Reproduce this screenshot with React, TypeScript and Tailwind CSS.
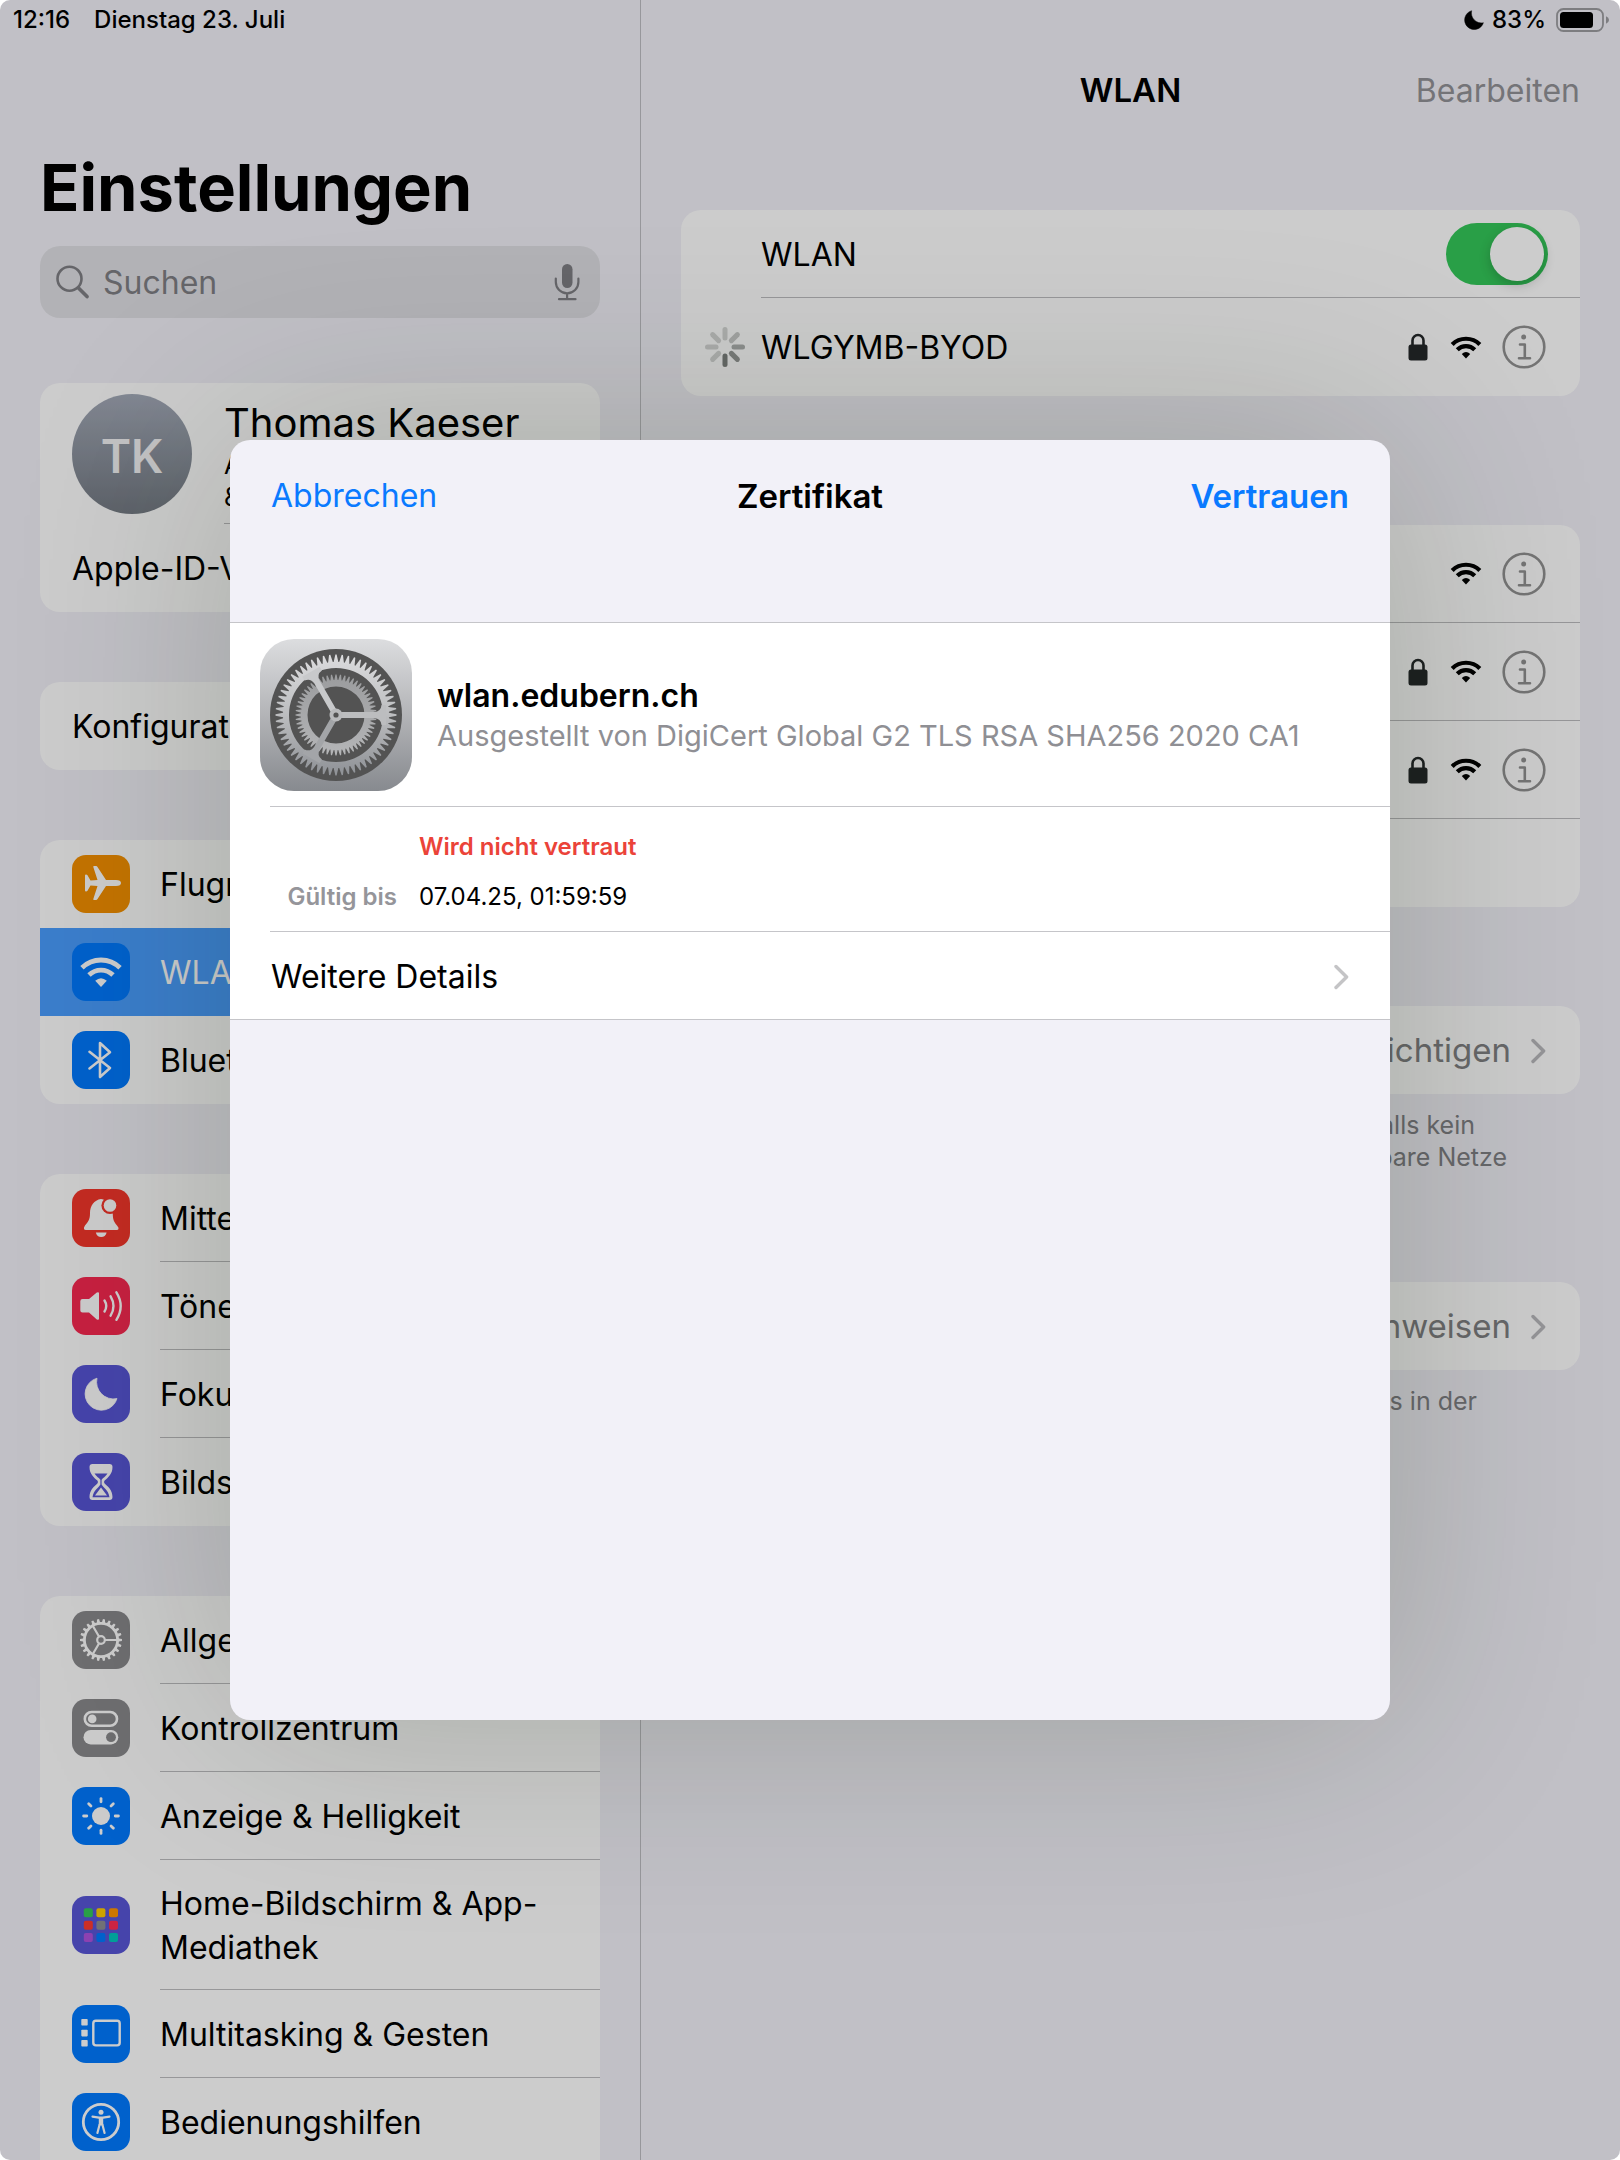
import type { ReactNode } from "react";

const LIGHT = "#ffffff";

/* ---------- geometry helpers ---------- */

function gearPath(cx: number, cy: number, tip: number, root: number, teeth: number, tipShare = 0.3, rootShare = 0.7) {
  const pts: string[] = [];
  const step = (Math.PI * 2) / teeth;
  for (let i = 0; i < teeth; i++) {
    const a = i * step;
    const corners: [number, number][] = [
      [root, -rootShare / 2],
      [tip, -tipShare / 2],
      [tip, tipShare / 2],
      [root, rootShare / 2],
    ];
    for (const [r, o] of corners) {
      const t = a + o * step;
      pts.push(`${(cx + r * Math.cos(t)).toFixed(2)} ${(cy + r * Math.sin(t)).toFixed(2)}`);
    }
  }
  return `M${pts.join("L")}Z`;
}

/* ---------- small glyphs ---------- */

function WifiShape({ stroke }: { stroke: number }) {
  return (
    <>
      <path d="M10 24.8A27 27 0 0 1 48 24.8" fill="none" stroke="currentColor" strokeWidth={stroke} />
      <path d="M17 32A17 17 0 0 1 41 32" fill="none" stroke="currentColor" strokeWidth={stroke} />
      <path d="M29 44L23.2 37.8Q29 32.6 34.8 37.8Z" fill="currentColor" />
    </>
  );
}

function WifiIcon() {
  return (
    <svg viewBox="7 12 44 34" className="h-[25px] w-8 text-black" aria-hidden="true">
      <WifiShape stroke={5.8} />
    </svg>
  );
}

function LockIcon() {
  return (
    <svg viewBox="0 0 20 28" className="h-7 w-5" aria-hidden="true">
      <path d="M4.5 13V7.5a5.5 5.5 0 0 1 11 0V13" fill="none" stroke="#25282a" strokeWidth="2.6" />
      <rect x="0.5" y="11.5" width="19" height="16" rx="2.5" fill="#25282a" />
    </svg>
  );
}

function InfoIcon() {
  return (
    <svg viewBox="0 0 44 44" className="h-11 w-11" fill="none" stroke="#919191" aria-hidden="true">
      <circle cx="22" cy="22" r="20.3" strokeWidth="2.6" />
      <circle cx="21.7" cy="12" r="2.5" fill="#919191" stroke="none" />
      <path d="M18 19.5h4.8V33M17 33.3h11" strokeWidth="2.6" strokeLinecap="round" strokeLinejoin="round" />
    </svg>
  );
}

function Chevron({ className }: { className: string }) {
  return (
    <svg viewBox="0 0 15 26" className={`h-[26px] w-[15px] ${className}`} fill="none" stroke="currentColor" strokeWidth="3.4" strokeLinecap="round" strokeLinejoin="round" aria-hidden="true">
      <path d="M2 2.5L12.6 13L2 23.5" />
    </svg>
  );
}

function Spinner() {
  const opacities = [0.22, 0.28, 0.42, 0.55, 0.68, 0.22, 0.22, 0.22];
  return (
    <svg viewBox="0 0 40 40" className="h-10 w-10" aria-hidden="true">
      {opacities.map((opacity, i) => (
        <rect key={i} x="17.5" y="0" width="5" height="13.5" rx="2.5" fill="#3f4542" opacity={opacity} transform={`rotate(${i * 45} 20 20)`} />
      ))}
    </svg>
  );
}

function MoonShape() {
  return <path d="M25 13.2A16.3 16.3 0 1 0 45 33.6A17 17 0 0 1 25 13.2Z" fill="currentColor" stroke="currentColor" strokeWidth="0.8" strokeLinejoin="round" />;
}

/* ---------- sidebar tiles (58 × 58 grid) ---------- */

const glyphs: Record<string, ReactNode> = {
  plane: (
    <path
      fill={LIGHT}
      d="M44 25H34L25.5 12Q25 11 24 11H22Q21 11 21.3 12L25.5 25L18.5 25.5L15.5 20.3Q15 19.5 14 19.5Q13 19.5 13 20.5V35.5Q13 36.5 14 36.5Q15 36.5 15.5 35.7L18.5 30.5L25.5 31L21.3 44Q21 45 22 45H24Q25 45 25.5 44L34 31H44Q49 31 49 28Q49 25 44 25Z"
    />
  ),
  wifi: <WifiShape stroke={4.8} />,
  bluetooth: <path d="M17.5 20.8L38 37L28 46V12L38 21.2L17.5 37.4" fill="none" stroke={LIGHT} strokeWidth="2.6" strokeLinecap="round" strokeLinejoin="round" />,
  bell: (
    <>
      <path fill={LIGHT} d="M29 10C22 11 18 17 18 24C18 31 16 33 13 36.5Q11.5 38.5 12 40Q12.3 41 14 41H44.5Q46.5 41 46.5 40Q47 38.5 45 36.5C42 33 40.8 31 40.8 24C40 17 36 11 29 10Z" />
      <path fill={LIGHT} d="M23.8 43.5H34.6Q33.5 48 29.2 48Q25 48 23.8 43.5Z" />
      <circle cx="38" cy="16.5" r="8.6" fill="#f5362b" />
      <circle cx="38" cy="16.5" r="6.3" fill={LIGHT} />
    </>
  ),
  speaker: (
    <>
      <path fill={LIGHT} d="M10.5 22H17L24.8 15.6Q27 14.4 27 16.5V41.5Q27 43.6 24.8 42.4L17 35.6H10.5Q8.3 35.6 8.3 33.5V24.2Q8.3 22 10.5 22Z" />
      <path d="M32.5 23.5Q36 29 32.5 34.5M38.6 19.3Q44.4 29 38.6 38.7M44.4 15.3Q53 29 44.4 42.8" fill="none" stroke={LIGHT} strokeWidth="2.4" strokeLinecap="round" />
    </>
  ),
  moon: <MoonShape />,
  hourglass: (
    <>
      <path fill={LIGHT} d="M20.5 11H37.5Q40.5 11 40.5 14C40.5 21 36 24.5 32.6 27.6Q31.4 29 32.6 30.4C36 33.5 40.5 37 40.5 44Q40.5 47 37.5 47H20.5Q17.5 47 17.5 44C17.5 37 22 33.5 25.4 30.4Q26.6 29 25.4 27.6C22 24.5 17.5 21 17.5 14Q17.5 11 20.5 11Z" />
      <path fill="#5856d6" d="M22.5 20.6H35.5C34 23.2 31 25 29.6 26.8V31.5C31 34.5 36.5 37 37.5 44.2H20.5C21.5 37 27 34.5 28.4 31.5V26.8C27 25 24 23.2 22.5 20.6Z" />
      <path fill={LIGHT} d="M29 34.5L35 42.6H23Z" />
    </>
  ),
  gear: (
    <>
      <path fill={LIGHT} fillRule="evenodd" d={`${gearPath(29, 29, 21, 18, 22, 0.35, 0.6)}M29 13.8A15.2 15.2 0 1 0 29 44.2A15.2 15.2 0 1 0 29 13.8Z`} />
      <circle cx="29" cy="29" r="3.8" fill="none" stroke={LIGHT} strokeWidth="2.2" />
      <path d="M33 29H45M27 25.5L21 15.2M27 32.5L21 42.8" stroke={LIGHT} strokeWidth="2.2" />
    </>
  ),
  switches: (
    <>
      <rect x="12.8" y="13" width="32.2" height="13.8" rx="6.9" fill="none" stroke={LIGHT} strokeWidth="2.6" />
      <circle cx="20.2" cy="19.9" r="4.3" fill={LIGHT} />
      <rect x="11.5" y="31" width="34.8" height="14.4" rx="7.2" fill={LIGHT} />
      <circle cx="39" cy="38.2" r="4.9" fill="#8a8a8d" />
    </>
  ),
  sun: (
    <>
      <circle cx="29" cy="29" r="9" fill={LIGHT} />
      {[0, 45, 90, 135, 180, 225, 270, 315].map((a) => (
        <path key={a} d="M29 11.6V14.8" stroke={LIGHT} strokeWidth="2.8" strokeLinecap="round" transform={`rotate(${a} 29 29)`} />
      ))}
    </>
  ),
  grid: (
    <>
      {["#34c759", "#ffcc00", "#ff9500", "#ff3b30", "#8e8e93", "#ff2d55", "#af52de", "#007aff", "#00c7be"].map((c, i) => (
        <rect key={c} x={11.8 + (i % 3) * 12.6} y={12.3 + Math.floor(i / 3) * 12.4} width="9" height="9" rx="2" fill={c} />
      ))}
    </>
  ),
  stage: (
    <>
      {[14, 24.8, 35].map((y) => (
        <rect key={y} x="9.3" y={y} width="6.4" height="6.6" rx="0.8" fill={LIGHT} />
      ))}
      <rect x="21.3" y="15.8" width="26.4" height="24.6" rx="2.6" fill="none" stroke={LIGHT} strokeWidth="2.4" />
    </>
  ),
  person: (
    <>
      <circle cx="29" cy="29" r="17.7" fill="none" stroke={LIGHT} strokeWidth="2.8" />
      <circle cx="29" cy="19.2" r="2.5" fill={LIGHT} />
      <path d="M20.5 23.6L27 24.6H31L37.5 23.6M25.4 40L27.6 31.5H30.4L32.6 40" fill="none" stroke={LIGHT} strokeWidth="2.2" strokeLinecap="round" strokeLinejoin="round" />
      <path d="M26.8 24H31.2V32H26.8Z" fill={LIGHT} />
    </>
  ),
};

function Tile({ glyph, color }: { glyph: string; color: string }) {
  return (
    <span className={`h-[58px] w-[58px] shrink-0 overflow-hidden rounded-[14px] text-white ${color}`}>
      <svg viewBox="0 0 58 58" className="h-full w-full" aria-hidden="true">
        {glyphs[glyph]}
      </svg>
    </span>
  );
}

/* ---------- sidebar ---------- */

type Item = { label: string; glyph: string; color: string; selected?: boolean; tall?: boolean; noLine?: boolean };

const groups: Item[][] = [
  [
    { label: "Flugmodus", glyph: "plane", color: "bg-[#f59000]", noLine: true },
    { label: "WLAN", glyph: "wifi", color: "bg-[#007aff]", selected: true, noLine: true },
    { label: "Bluetooth", glyph: "bluetooth", color: "bg-[#007aff]" },
  ],
  [
    { label: "Mitteilungen", glyph: "bell", color: "bg-[#f5362b]" },
    { label: "Töne", glyph: "speaker", color: "bg-[#f92850]" },
    { label: "Fokus", glyph: "moon", color: "bg-[#5856d6]" },
    { label: "Bildschirmzeit", glyph: "hourglass", color: "bg-[#5856d6]" },
  ],
  [
    { label: "Allgemein", glyph: "gear", color: "bg-[#8a8a8d]" },
    { label: "Kontrollzentrum", glyph: "switches", color: "bg-[#8a8a8d]" },
    { label: "Anzeige & Helligkeit", glyph: "sun", color: "bg-[#007aff]" },
    { label: "Home-Bildschirm & App-Mediathek", glyph: "grid", color: "bg-[#5856d6]", tall: true },
    { label: "Multitasking & Gesten", glyph: "stage", color: "bg-[#007aff]" },
    { label: "Bedienungshilfen", glyph: "person", color: "bg-[#007aff]" },
  ],
];

function SidebarRow({ item, last }: { item: Item; last: boolean }) {
  return (
    <a
      href="#"
      className={`flex items-center gap-[30px] pl-8 ${item.tall ? "h-[130px]" : "h-[88px]"} ${item.selected ? "bg-[#4a9eff] text-white" : "text-black"}`}
    >
      <Tile glyph={item.glyph} color={item.color} />
      <span className={`flex h-full min-w-0 flex-1 items-center pt-0.5 text-[32px] leading-[44px] ${last || item.noLine ? "" : "border-b border-[#bdbdc0]"}`}>
        <span className="pr-10">{item.label}</span>
      </span>
    </a>
  );
}

function Sidebar() {
  return (
    <aside className="flex w-[641px] shrink-0 flex-col border-r border-[#bdbdc2] px-10 pt-[148px]">
      <h1 className="text-[65px] leading-[80px] font-bold">Einstellungen</h1>
      <div className="mt-[18px] flex h-[72px] shrink-0 items-center rounded-[20px] bg-[#dfdfe4] pr-5 pl-4 text-[#7f7f84]">
        <svg viewBox="0 0 34 34" className="h-[34px] w-[34px]" fill="none" stroke="currentColor" aria-hidden="true">
          <circle cx="13.5" cy="13.7" r="12" strokeWidth="2.6" />
          <path d="M22.5 23L31 31.6" strokeWidth="3.6" strokeLinecap="round" />
        </svg>
        <input type="search" aria-label="Suchen" placeholder="Suchen" className="ml-[13px] min-w-0 flex-1 bg-transparent pt-0.5 text-[32px] leading-10 outline-none placeholder:text-[#7f7f84]" />
        <button type="button" aria-label="Diktieren">
          <svg viewBox="0 0 26 38" className="h-[38px] w-[26px]" fill="none" stroke="currentColor" strokeWidth="2.2" strokeLinecap="round" aria-hidden="true">
            <rect x="8" y="1" width="10.5" height="24" rx="5.2" fill="currentColor" stroke="none" />
            <path d="M1.8 15.5V19a11.3 11.3 0 0 0 22.6 0V15.5M13.1 30.5V36M5 36.2H21.5" />
          </svg>
        </button>
      </div>

      <section className="mt-[65px] shrink-0 overflow-hidden rounded-[20px] bg-white">
        <a href="#" className="flex h-[141px] items-start gap-8 pl-8">
          <span className="mt-[11px] flex h-[120px] w-[120px] shrink-0 items-center justify-center rounded-full bg-linear-to-b from-[#a3aab8] to-[#757b84] pt-1 text-[46px] font-semibold text-[#f4f4f6]">
            TK
          </span>
          <span className="flex h-full flex-1 flex-col border-b border-[#bdbdc0] pt-3.5 whitespace-nowrap">
            <span className="text-[40px] leading-[52px]">Thomas Kaeser</span>
            <span className="text-[25px] leading-8">Apple-ID, iCloud, Medien</span>
            <span className="text-[25px] leading-8">&amp; Käufe</span>
          </span>
        </a>
        <a href="#" className="flex h-[88px] items-center pt-0.5 pl-8 text-[32px] whitespace-nowrap">
          Apple-ID-Vorschläge
        </a>
      </section>

      <section className="mt-[70px] shrink-0 rounded-[20px] bg-white">
        <a href="#" className="flex h-[88px] items-center pt-0.5 pl-8 text-[32px]">
          Konfiguration
        </a>
      </section>

      {groups.map((group, g) => (
        <nav key={g} className="mt-[70px] shrink-0 overflow-hidden rounded-[20px] bg-white last:rounded-b-none">
          {group.map((item, i) => (
            <SidebarRow key={item.label} item={item} last={i === group.length - 1} />
          ))}
        </nav>
      ))}
    </aside>
  );
}

/* ---------- detail pane ---------- */

function NetworkMeta({ locked }: { locked: boolean }) {
  return (
    <span className="ml-auto flex items-center pr-[34px]">
      {locked && <LockIcon />}
      <span className="ml-[22px]">
        <WifiIcon />
      </span>
      <button type="button" aria-label="Netzwerkinfo" className="ml-5">
        <InfoIcon />
      </button>
    </span>
  );
}

function Detail() {
  return (
    <main className="flex min-w-0 flex-1 flex-col px-10 pt-[51px]">
      <header className="grid h-20 grid-cols-3 items-center text-[33px]">
        <h2 className="col-start-2 text-center font-semibold">WLAN</h2>
        <button type="button" className="justify-self-end text-[32px] text-[#929296]">
          Bearbeiten
        </button>
      </header>

      <section className="mt-[79px] rounded-[20px] bg-white text-[32px]">
        <div className="ml-20 flex h-[88px] items-center justify-between border-b border-[#bdbdc0] pr-8">
          <label htmlFor="wlan-switch" className="pt-0.5">
            WLAN
          </label>
          <input
            id="wlan-switch"
            type="checkbox"
            role="switch"
            defaultChecked
            className="flex h-[62px] w-[102px] appearance-none items-center rounded-full bg-[#c9c9cb] p-1 before:h-[54px] before:w-[54px] before:rounded-full before:bg-white before:shadow-[0_4px_12px_rgba(0,0,0,0.2)] checked:justify-end checked:bg-[#34c759]"
          />
        </div>
        <div className="flex h-[98px] items-center">
          <span className="flex w-20 justify-center pl-2">
            <Spinner />
          </span>
          <span className="pt-0.5">WLGYMB-BYOD</span>
          <NetworkMeta locked />
        </div>
      </section>

      <section className="mt-[129px] rounded-[20px] bg-white">
        <div className="ml-20 flex h-[98px] items-center border-b border-[#bdbdc0]">
          <NetworkMeta locked={false} />
        </div>
        <div className="ml-20 flex h-[98px] items-center border-b border-[#bdbdc0]">
          <NetworkMeta locked />
        </div>
        <div className="ml-20 flex h-[98px] items-center border-b border-[#bdbdc0]">
          <NetworkMeta locked />
        </div>
        <div className="h-[88px]" />
      </section>

      <section className="mt-[99px] h-[276px]">
        <a href="#" className="flex h-[88px] items-center justify-end gap-5 rounded-[20px] bg-white pt-0.5 pr-[34px] text-[33px] text-[#818184]">
          Benachrichtigen
          <Chevron className="text-[#bababd]" />
        </a>
        <p className="mt-[15px] text-right text-[25px] leading-8 text-[#818186]">
          <span className="block pr-[105px]">Falls kein</span>
          <span className="block pr-[73px]">verfügbare Netze</span>
        </p>
      </section>

      <section>
        <a href="#" className="flex h-[88px] items-center justify-end gap-5 rounded-[20px] bg-white pt-0.5 pr-[34px] text-[33px] text-[#818184]">
          Hinweisen
          <Chevron className="text-[#bababd]" />
        </a>
        <p className="mt-[15px] pr-[103px] text-right text-[25px] leading-8 text-[#818186]">Hotspots in der</p>
      </section>
    </main>
  );
}

/* ---------- status bar ---------- */

function StatusBar() {
  return (
    <div className="absolute inset-x-0 top-0 z-20 flex h-10 items-center pr-2.5 pl-[13px] text-[24px] font-medium">
      <span>12:16</span>
      <span className="ml-6">Dienstag 23. Juli</span>
      <svg viewBox="12 12 34 34" className="ml-auto h-5 w-5 text-black" aria-hidden="true">
        <MoonShape />
      </svg>
      <span className="ml-2">83%</span>
      <svg viewBox="0 0 54 24" className="ml-2.5 h-6 w-[54px]" aria-hidden="true">
        <rect x="1" y="1" width="46" height="22" rx="6.5" fill="none" stroke="#7d7d80" strokeWidth="1.8" />
        <rect x="4" y="4" width="33" height="16" rx="3.5" />
        <path d="M50 8.2Q53 9.5 53 12Q53 14.5 50 15.8Z" fill="#7d7d80" />
      </svg>
    </div>
  );
}

/* ---------- certificate sheet ---------- */

function SettingsIcon() {
  return (
    <svg viewBox="0 0 152 152" className="h-[152px] w-[152px] shrink-0" aria-hidden="true">
      <defs>
        <linearGradient id="plate" x1="0" y1="0" x2="0" y2="1">
          <stop offset="0" stopColor="#dcdddf" />
          <stop offset="0.5" stopColor="#b3b4b7" />
          <stop offset="1" stopColor="#878a8f" />
        </linearGradient>
        <linearGradient id="metal" gradientUnits="userSpaceOnUse" x1="0" y1="14" x2="0" y2="138">
          <stop offset="0" stopColor="#dcdcde" />
          <stop offset="0.5" stopColor="#bcbdbf" />
          <stop offset="1" stopColor="#8d9095" />
        </linearGradient>
        <linearGradient id="metal-inner" gradientUnits="userSpaceOnUse" x1="0" y1="36" x2="0" y2="116">
          <stop offset="0" stopColor="#9b9c9e" />
          <stop offset="1" stopColor="#b4b5b7" />
        </linearGradient>
      </defs>
      <rect width="152" height="152" rx="34" fill="url(#plate)" />
      <circle cx="76" cy="76" r="66" fill="#535353" />
      <path
        fill="url(#metal-inner)"
        fillRule="evenodd"
        d={`${gearPath(76, 76, 40.5, 35, 56, 0.25, 0.85)}M76 47.5A28.5 28.5 0 1 0 76 104.5A28.5 28.5 0 1 0 76 47.5Z`}
      />
      <path
        fill="url(#metal)"
        fillRule="evenodd"
        d={`${gearPath(76, 76, 60.5, 53, 60, 0.2, 0.85)}M76 29A47 47 0 1 0 76 123A47 47 0 1 0 76 29Z`}
      />
      {[0, 120, 240].map((a) => (
        <path
          key={a}
          fill={a === 0 ? "#bcbdbf" : a === 120 ? "#a3a5a8" : "#c8c9cb"}
          transform={`rotate(${a} 76 76)`}
          d="M76 73H114Q121 72.5 121.5 66L126 66V86L121.5 86Q121 79.5 114 79H76Z"
        />
      ))}
      <circle cx="76" cy="76" r="6.5" fill="#b9babc" />
      <circle cx="76" cy="76" r="2.6" fill="#535353" />
    </svg>
  );
}

function CertificateSheet() {
  return (
    <div
      role="dialog"
      aria-labelledby="sheet-title"
      className="flex h-[1280px] max-h-full w-[1160px] max-w-full flex-col overflow-hidden rounded-[20px] bg-[#f2f1f8] shadow-[0_0_220px_rgba(20,35,10,0.2)]"
    >
      <header className="grid h-[182px] grid-cols-3 items-start px-[41px] pt-[34px] text-[33px] leading-[44px]">
        <button type="button" className="justify-self-start text-[32px] text-[#0a7aff]">
          Abbrechen
        </button>
        <h2 id="sheet-title" className="text-center font-semibold">
          Zertifikat
        </h2>
        <button type="button" className="justify-self-end font-semibold text-[#0a7aff]">
          Vertrauen
        </button>
      </header>
      <div className="border-y border-[#c5c5c9] bg-white">
        <div className="ml-[30px] flex items-center gap-[25px] pt-4">
          <SettingsIcon />
          <div className="pt-0.5">
            <h3 className="text-[32px] leading-10 font-semibold">wlan.edubern.ch</h3>
            <p className="text-[29px] leading-10 text-[#8f8f94]">Ausgestellt von DigiCert Global G2 TLS RSA SHA256 2020 CA1</p>
          </div>
        </div>
        <dl className="mt-[15px] ml-10 grid h-[126px] grid-cols-[127px_1fr] content-start gap-x-[22px] gap-y-[18px] border-y border-[#c5c5c9] pt-6 text-[24px] leading-8">
          <dd className="col-start-2 font-semibold text-[#eb4339]">Wird nicht vertraut</dd>
          <dt className="text-right font-semibold text-[#95959a]">Gültig bis</dt>
          <dd>07.04.25, 01:59:59</dd>
        </dl>
        <a href="#" className="flex h-[87px] items-center justify-between pt-0.5 pr-[41px] pl-[41px] text-[32px]">
          Weitere Details
          <Chevron className="text-[#c4c4c6]" />
        </a>
      </div>
    </div>
  );
}

export default function App() {
  return (
    <div className="h-screen bg-white font-['Inter',sans-serif] text-black">
      <div className="relative flex h-full overflow-hidden rounded-[10px] bg-[#f2f1f8]">
        <StatusBar />
        <Sidebar />
        <Detail />
        <div className="absolute inset-0 z-10 flex items-center justify-center bg-black/20">
          <CertificateSheet />
        </div>
      </div>
    </div>
  );
}
